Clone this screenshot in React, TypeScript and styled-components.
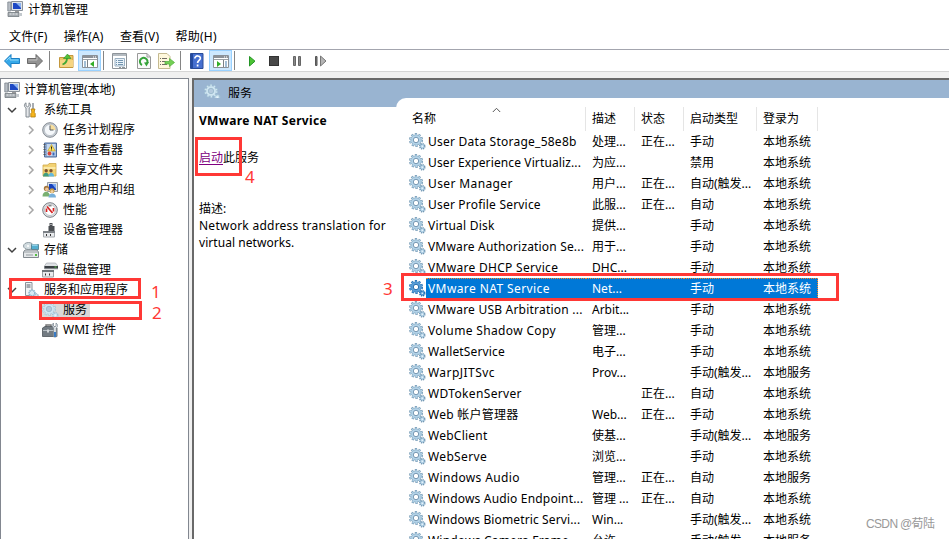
import React from 'react';
import styled, { createGlobalStyle, css } from 'styled-components';

const Global = createGlobalStyle`
  * { box-sizing: border-box; }
  html, body { margin: 0; padding: 0; overflow: hidden; }
  body { font: 12px/20px "Noto Sans", "Noto Sans CJK SC", sans-serif; color: #000; background: #fff; }
  svg { flex: none; }
`;

const Window = styled.div`
  position: relative;
  width: 949px; height: 539px;
  overflow: hidden;
  display: flex; flex-direction: column;
  background: #fff;
`;
const TitleBar = styled.div`
  height: 24px; flex: none;
  display: flex; align-items: flex-start; gap: 5px;
  padding: 0 0 0 7px;
  svg { margin-top: 1px; }
`;
const MenuBar = styled.div`
  height: 25px; flex: none;
  display: flex; align-items: center; gap: 16.3px;
  padding: 1px 0 0 9px;
`;
const MenuItem = styled.span`
  white-space: nowrap;
  letter-spacing: 0.2px;
`;
const ToolBar = styled.div`
  height: 23px; flex: none;
  display: flex; align-items: center;
  border-top: 1px solid #a3a5ae; border-bottom: 1px solid #d5d5d5;
  padding-left: 4px;
`;
const Tool = styled.div<{ $w?: number; $ml?: number; $on?: boolean }>`
  width: ${p => p.$w ?? 16}px; height: 21px; flex: none;
  margin-left: ${p => p.$ml ?? 0}px;
  display: flex; align-items: center; justify-content: center;
  ${p => p.$on && css`background: #cce8ff; border: 1px solid #99d1ff;`}
`;
const Divider = styled.div<{ $ml: number }>`
  width: 1px; height: 19px; flex: none; margin-left: ${p => p.$ml}px; background: #858585;
`;
const Workspace = styled.div`
  flex: 1; min-height: 0; display: flex; gap: 3px;
  padding-top: 6px; background: #f0f0f0;
`;
const TreePane = styled.div`
  width: 189px; flex: none; background: #fff;
  border: solid #828790; border-width: 1px 1px 0 1px;
  padding-top: 1px;
`;
const TreeRow = styled.div<{ $level: number }>`
  height: 20px; display: flex; align-items: center;
  padding-left: ${p => [3, 3, 22][p.$level]}px;
  white-space: nowrap;
`;
const Twisty = styled.span`
  width: 19px; height: 20px; display: flex; align-items: center; padding-left: 3px;
`;
const Label = styled.span<{ $selected?: boolean; $root?: boolean }>`
  height: 19px; line-height: 18px; margin-left: ${p => (p.$root ? 2 : 3)}px; padding: 0 3px 0 2px;
  background: ${p => (p.$selected ? '#d9d9d9' : 'transparent')};
`;
const IconBox = styled.span<{ $selected?: boolean }>`
  width: 16px; height: 19px; display: flex; align-items: center;
  ${p => p.$selected && css`background: #d9d9d9; box-shadow: 3px 0 #d9d9d9;`}
`;
const MainPane = styled.div`
  flex: 1; min-width: 0; background: #fff;
  border: solid #696969; border-width: 2px 0 0 2px;
  display: flex; flex-direction: column;
`;
const PaneHeader = styled.div`
  height: 18px; flex: none; background: #99b4d1;
  display: flex; align-items: flex-start; padding: 4px 0 0 10px; gap: 7px;
  white-space: nowrap;
`;
const PaneBody = styled.div`
  flex: 1; min-height: 0; display: flex;
  background: linear-gradient(#99b4d1 9px, #fff 9px);
`;
const PaneTitle = styled.div`line-height: 20px;`;
const Detail = styled.div`
  width: 202px; flex: none; padding: 14px 0 0 5px; line-height: 17px; white-space: nowrap;
`;
const ServiceTitle = styled.div`
  font-weight: 700; letter-spacing: 0.32px;
`;
const Action = styled.div`margin-top: 20px;`;
const Link = styled.span`color: #800080; text-decoration: underline; text-underline-offset: 2px;`;
const Description = styled.div`margin-top: 34px;`;
const DescriptionLine = styled.div<{ $track: number }>`letter-spacing: ${p => p.$track}px;`;

const ListPane = styled.div`
  flex: 1; min-width: 0; background: #fff; border-top-left-radius: 10px;
  padding-top: 9px;
`;
const columns = '190px 49px 49px 73px 61px';
const HeadRow = styled.div`
  position: relative;
  display: grid; grid-template-columns: ${columns};
  height: 24px;
`;
const HeadCell = styled.div`
  border-right: 1px solid #e5e5e5; padding: 2px 0 0 6px; white-space: nowrap;
  &:first-child { padding-left: 16px; }
`;
const SortMark = styled.svg`
  position: absolute; left: 96px; top: 0;
`;
const Row = styled.div`
  height: 21px; display: grid; grid-template-columns: ${columns};
  line-height: 21px;
`;
const NameCell = styled.div`
  min-width: 0; display: flex; align-items: center; padding-left: 13px;
`;
const Fill = styled.div<{ $on?: boolean; $end?: boolean }>`
  flex: 1; min-width: 0; height: 21px; white-space: nowrap;
  ${p => p.$on && css`
    height: 21px; line-height: 20px;
    color: #fff; background: #0078d7; border-top: 1px dotted #ff8728;
    ${p.$end && css`border-right: 1px dotted #ff8728;`}
  `}
`;
const Name = styled(Fill)<{ $track: number }>`
  padding-left: 2px; letter-spacing: ${p => p.$track}px;
`;
const Cell = styled(Fill)`padding-left: 6px;`;

const Mark = styled.div<{ $x: number; $y: number; $w: number; $h: number }>`
  position: absolute; border: 3px solid #ff3835;
  left: ${p => p.$x}px; top: ${p => p.$y}px; width: ${p => p.$w}px; height: ${p => p.$h}px;
`;
const MarkNumber = styled.div<{ $x: number; $y: number }>`
  position: absolute; left: ${p => p.$x}px; top: ${p => p.$y}px;
  font-size: 17px; line-height: 20px; color: #ff3835;
`;
const Watermark = styled.div`
  position: absolute; left: 866px; top: 514px; font-size: 12px; letter-spacing: -0.65px; color: #999; white-space: nowrap;
  font-family: "Liberation Sans", "Noto Sans CJK SC", sans-serif;
`;

const Svg = ({ children, w = 16, h = 16 }: { children: React.ReactNode; w?: number; h?: number }) => (
  <svg width={w} height={h} viewBox={`0 0 ${w} ${h}`} fill="none">{children}</svg>
);

const Computer = () => (
  <Svg>
    <path d="M.8 1h3v9h-3z" fill="#b8bec5" stroke="#7b838c" strokeWidth=".8" />
    <path d="M4.500.5h11v9h-11z" fill="#e0e4e8" stroke="#8b929a" />
    <path d="M6 2h8v6H6z" fill="#1d48c4" />
    <path d="M9 2h5v5z" fill="#8cb2f0" />
    <path d="M8 10h4v1.500H8z" fill="#999" />
    <path d="M1 11.500h11v4H1z" fill="#a5abb0" stroke="#747b81" strokeWidth=".8" />
    <path d="M2.500 13h2m1 0h2m1 0h2" stroke="#e9ecef" />
    <path d="M13 12h2v3h-2z" fill="#c2c8cd" />
  </Svg>
);
const Tools = () => (
  <Svg>
    <path d="M3 .8v3l1.500 1L6 3.800v-3c2 1 2.200 4 .2 5.200V15H3V6C.8 4.800 1 1.800 3 .8z" fill="#e5e8eb" stroke="#777f87" strokeWidth=".9" />
    <path d="M10 1v6" stroke="#8b9299" strokeWidth="1.500" />
    <path d="M8 7h4l-.7 2v1.500l.9 1V15H7.800v-3.500l.9-1V9z" fill="#f6b51c" stroke="#b07b0a" strokeWidth=".8" />
  </Svg>
);
const Clock = () => (
  <Svg>
    <circle cx="8" cy="8" r="7.300" fill="#c9ced4" stroke="#858c94" />
    <circle cx="8" cy="8" r="5.600" fill="#f5f8fb" stroke="#a8b0b8" strokeWidth=".6" />
    <path d="M8 2.500A5.500 5.500 0 0 1 13.500 8H8z" fill="#f7dd9b" />
    <path d="M8 3.500V8h3.500" stroke="#555c64" />
  </Svg>
);
const EventLog = () => (
  <Svg>
    <path d="M2.500 1h12v14h-12z" fill="#8dabd4" stroke="#4f6d9c" />
    <path d="M5 2h8.500v12H5z" fill="#c5d7ee" />
    <path d="M1.500 2.500h2m-2 2.500h2m-2 2.500h2m-2 2.500h2m-2 2.500h2" stroke="#555" />
    <path d="M9.500 2.500 13.300 9H5.700z" fill="#ffe25a" stroke="#b59720" strokeWidth=".6" />
    <path d="M9.500 4.500v2.300m0 .7v.8" stroke="#222" />
    <circle cx="7.500" cy="11.500" r="1.900" fill="#d9443b" />
    <path d="M10.500 10.500h2v3h-2z" fill="#3a68b8" />
  </Svg>
);
const SharedFolder = () => (
  <Svg>
    <path d="M1 3h5l1-1.500h7V14H1z" fill="#f2d274" stroke="#cfa84a" strokeWidth=".8" />
    <path d="M1.500 5h12v2h-12z" fill="#fbe9a8" />
    <circle cx="4.200" cy="8.800" r="1.700" fill="#7c5130" />
    <circle cx="9" cy="8.800" r="1.700" fill="#7c5130" />
    <path d="M1 14.500c0-5 6-5 6 0z" fill="#3f9c80" />
    <path d="M6.500 14.500c0-5 5.500-5 5.500 0z" fill="#62b8dc" />
  </Svg>
);
const Users = () => (
  <Svg>
    <path d="M5.500.5h10v9h-10z" fill="#dde2e7" stroke="#969da5" />
    <path d="M7 2h7v6H7z" fill="#1742bd" /><path d="M10 2h4v5z" fill="#7ba8ef" />
    <circle cx="4.500" cy="6.500" r="2.700" fill="#a4783f" /><circle cx="4.800" cy="7.200" r="1.700" fill="#efc69b" />
    <circle cx="10" cy="8.800" r="2.500" fill="#c29a45" /><circle cx="10" cy="9.400" r="1.500" fill="#f3d0a0" />
    <path d="M.5 14.500C.5 8 8 8.500 8 14.500z" fill="#79b072" /><path d="M6.500 15.500c0-5.500 7.500-5.500 7.500 0z" fill="#78b0da" />
  </Svg>
);
const Performance = () => (
  <Svg>
    <circle cx="8" cy="8" r="7.300" fill="#e3e5e8" stroke="#777d83" />
    <circle cx="8" cy="8" r="5.500" fill="#fff" stroke="#a8adb2" strokeWidth=".7" />
    <path d="M4.500 10V6.500m7 3V6M5 4.500l5.500 6.500" stroke="#d52323" strokeWidth="1.700" />
    <path d="M6.500 3.800h3" stroke="#555" />
  </Svg>
);
const Device = () => (
  <Svg>
    <path d="M7.500 1h3v3h2v6h-6V4h1z" fill="#4b4f53" /><path d="M8.500 2h1v1h-1z" fill="#fff" />
    <path d="M1.500 9.500h11v5.500h-11z" fill="#e8eaec" stroke="#a2a7ac" />
    <path d="M1 9h12v2H1z" fill="#7d8287" />
    <path d="M4.500 12v2m4-2v2" stroke="#333" />
  </Svg>
);
const Storage = () => (
  <Svg>
    <ellipse cx="5.500" cy="4" rx="5" ry="3.500" fill="#d2dce0" stroke="#7a8990" strokeWidth=".8" /><circle cx="5" cy="4" r="1" fill="#fff" />
    <path d="M8.500 2.500h7v5h-7z" fill="#54afd0" stroke="#467889" strokeWidth=".8" /><path d="M9 3h5.500" stroke="#c9f1ff" />
    <path d="M2 8h12l1.500 2v5.500H.5V10z" fill="#e4e7e9" stroke="#757d83" strokeWidth=".9" />
    <path d="M1 10h14" stroke="#989fa4" /><path d="M3 13h7" stroke="#949b9f" /><path d="M12 12h2v2h-2z" fill="#54bd43" />
  </Svg>
);
const Disk = () => (
  <Svg>
    <path d="M4.500 1h9L16 4v3H2.500V4z" fill="#dfe2e5" stroke="#9ba0a5" strokeWidth=".6" /><path d="M2.500 4H16v2.500H2.500z" fill="#3b4044" /><path d="M12.500 4.500h2v1h-2z" fill="#58c94a" />
    <path d="M.5 8.500h11v6.500H.5z" fill="#e8eaec" stroke="#9ca1a6" /><path d="M0 8h12v2H0z" fill="#6f757a" /><path d="M3.500 11.500v2m4-2v2" stroke="#333" />
  </Svg>
);
const ServerApps = () => (
  <Svg>
    <path d="M2.500.5h6.500v13h-6.500z" fill="#f0f2f4" stroke="#8b9299" /><path d="M3.500 3h4m-4 2h4" stroke="#555f68" />
    <path d="M1 14.500h6" stroke="#8b9299" />
    <circle cx="9" cy="11" r="2.900" fill="#d8eaf5" stroke="#8fb7cf" strokeWidth="1.700" strokeDasharray="1.500 .6" />
    <circle cx="13.500" cy="13.300" r="1.600" fill="#d6e5ee" stroke="#7ba2ba" strokeDasharray="1 .6" />
  </Svg>
);

type GearTone = 'normal' | 'faded' | 'selected';
const gearTones: Record<GearTone, { edge: string; ring: string; rim: string; hub: string }> = {
  normal: { edge: '#7297b2', ring: '#b3d3e8', rim: '#6c8fab', hub: '#fff' },
  faded: { edge: '#a0c0d3', ring: '#cfe5f1', rim: '#9bbacd', hub: '#b4cade' },
  selected: { edge: '#1c6cb0', ring: '#5a9fd8', rim: '#1763a6', hub: '#fff' },
};
const Gear = ({ tone = 'normal' }: { tone?: GearTone }) => {
  const t = gearTones[tone];
  return (
    <Svg w={17} h={17}>
      <circle cx="7" cy="7" r="6" stroke={t.edge} strokeWidth="2" strokeDasharray="2.200 1.570" />
      <circle cx="7" cy="7" r="5.200" fill={t.ring} stroke={t.edge} strokeWidth=".6" />
      <circle cx="7" cy="7" r="5.400" stroke={t.ring} strokeWidth="2" strokeDasharray="1.300 2.100" strokeDashoffset="-.4" />
      <circle cx="7" cy="7" r="2.700" fill={t.hub} stroke={t.rim} strokeWidth=".9" />
      <circle cx="13.300" cy="13.300" r="2.500" fill={t.ring} stroke={t.edge} strokeWidth="1.500" strokeDasharray="1.150 .81" />
      <circle cx="13.300" cy="13.300" r=".8" fill="#edf7fc" />
    </Svg>
  );
};
const Toolbox = () => (
  <Svg>
    <path d="M4 5V3h5v2" stroke="#777" strokeWidth="1.400" />
    <path d="M.5 6 3 4.500h9.500L15 6v8.500H.5z" fill="#737b82" stroke="#4e555b" strokeWidth=".8" />
    <path d="M1 8.500h13" stroke="#b9c0c5" /><path d="M5 7.500h2v3H5z" fill="#d3d7da" />
    <path d="M11.500 1v3l1.300 1L14 4V1c2 1 2 4 .2 5.200V15h-2.500V6C9.700 4.800 9.700 2 11.500 1z" fill="#e8edf1" stroke="#78848e" strokeWidth=".7" />
    <path d="M12 10h2v5h-2z" fill="#3a7bc4" />
  </Svg>
);

const Arrow = ({ forward = false }: { forward?: boolean }) => (
  <Svg>
    <path d={forward ? 'M15.500 8 9 1.500v4H.5v5H9v4z' : 'M.5 8 7 1.500v4h8.500v5H7v4z'} fill={forward ? '#929292' : '#36a9e9'} stroke={forward ? '#6a6a6a' : '#1b7fc4'} />
    <path d={forward ? 'M1.500 7H10V4' : 'M14.500 7H6V4L2.500 7.500'} stroke={forward ? '#c0c0c0' : '#91d9fa'} />
  </Svg>
);
const FolderUp = () => (
  <Svg w={15}>
    <path d="M.5 4.500H7l1-2h6v12H.5z" fill="#edc663" stroke="#c3973d" /><path d="M1 7h13v7H1z" fill="#f6d583" />
    <path d="M3.500 11.500C6.500 10.500 8 8.500 8 5" stroke="#3fa735" strokeWidth="1.800" /><path d="M4.500 5.500 8.500 1 12 5.500z" fill="#55c237" stroke="#27912a" strokeWidth=".6" />
  </Svg>
);
const ConsoleWindow = ({ right = false }: { right?: boolean }) => (
  <Svg>
    <path d="M.5 2.500h15v12H.5z" fill="#fff" stroke="#8b9198" /><path d="M1 3h14v2H1z" fill="#8b9198" />
    <path d="M11 4h1m1 0h1" stroke="#fff" /><path d="M1 6.500h14" stroke="#9aa0a5" />
    {right
      ? <><path d="M10.500 7v7" stroke="#7b8188" /><path d="M12 9h2m-2 2h2m-2 2h2" stroke="#477fae" /><path d="m4 8 4 3-4 3z" fill="#32ad27" /></>
      : <><path d="M5.500 7v7" stroke="#7b8188" /><path d="M2 9h2m-2 2h2m-2 2h2" stroke="#477fae" /><path d="m12 8-4 3 4 3z" fill="#32ad27" /></>}
  </Svg>
);
const Properties = () => (
  <Svg>
    <path d="M.5.5h14v15H.5z" fill="#fff" stroke="#8e9499" /><path d="M1 1h13v2H1z" fill="#b3bac0" />
    <path d="M3 5.500h9.500v7.500H3z" fill="#eaf3fa" stroke="#9ab0c2" /><path d="M4 7.500h1m1 0h5m-7 2h1m1 0h5m-7 2h1m1 0h5" stroke="#7294af" /><path d="M7 14.500h2m1 0h3" stroke="#8e9499" />
  </Svg>
);
const Refresh = () => (
  <Svg w={14}>
    <path d="M.5.5h9.500l3.500 3.500v11.500H.5z" fill="#fbfbfb" stroke="#999" /><path d="M10 .5V4h3.500" stroke="#999" />
    <path d="M5 12A3.800 3.800 0 1 1 10 10.500" stroke="#36a33a" strokeWidth="2" /><path d="m7 9.500 5-.5-2.500 4.500z" fill="#36a33a" />
  </Svg>
);
const Export = () => (
  <Svg w={17}>
    <path d="M.5.500h8.500l3 3v12H.500z" fill="#fff8dc" stroke="#c5ba91" /><path d="M2 5.500h1m1 0h5m-7 3h1m1 0h4m-6 3h1m1 0h5" stroke="#706c64" />
    <path d="M7 8.500h4.500V5.500l5 4-5 4v-2.500H7z" fill="#73cf54" stroke="#5bb445" strokeWidth=".8" />
  </Svg>
);
const Help = () => (
  <Svg w={14}>
    <path d="M.5.5h12.500v15H.5z" fill="#4670d0" stroke="#2a4c97" /><path d="M1 1h2v14H1z" fill="#234a9e" />
    <path d="M4.800 5.500c0-3.500 6-3.300 5.500.2C10 7.500 7.600 7.500 7.600 10M7.600 11.500v2" stroke="#fff" strokeWidth="1.700" />
  </Svg>
);

type TreeNode = { level: number; text: string; Icon: React.ComponentType; state?: 'open' | 'closed'; selected?: boolean };
const FadedGear = () => <Gear tone="faded" />;
const tree: TreeNode[] = [
  { level: 0, text: '计算机管理(本地)', Icon: Computer },
  { level: 1, text: '系统工具', Icon: Tools, state: 'open' },
  { level: 2, text: '任务计划程序', Icon: Clock, state: 'closed' },
  { level: 2, text: '事件查看器', Icon: EventLog, state: 'closed' },
  { level: 2, text: '共享文件夹', Icon: SharedFolder, state: 'closed' },
  { level: 2, text: '本地用户和组', Icon: Users, state: 'closed' },
  { level: 2, text: '性能', Icon: Performance, state: 'closed' },
  { level: 2, text: '设备管理器', Icon: Device },
  { level: 1, text: '存储', Icon: Storage, state: 'open' },
  { level: 2, text: '磁盘管理', Icon: Disk },
  { level: 1, text: '服务和应用程序', Icon: ServerApps, state: 'open' },
  { level: 2, text: '服务', Icon: FadedGear, selected: true },
  { level: 2, text: 'WMI 控件', Icon: Toolbox },
];

const S = '本地系统';
const L = '本地服务';
const R = '正在...';
/* name, description, status, startup type, log on as, letter spacing of the name */
const services: [string, string, string, string, string, number][] = [
  ['User Data Storage_58e8b', '处理...', R, '手动', S, 0.25],
  ['User Experience Virtualiz...', '为应...', '', '禁用', S, 0.12],
  ['User Manager', '用户...', R, '自动(触发...', S, 0.38],
  ['User Profile Service', '此服...', R, '自动', S, 0.2],
  ['Virtual Disk', '提供...', '', '手动', S, 0.22],
  ['VMware Authorization Se...', '用于...', '', '手动', S, 0.17],
  ['VMware DHCP Service', 'DHC...', '', '手动', S, 0.3],
  ['VMware NAT Service', 'Net...', '', '手动', S, 0.4],
  ['VMware USB Arbitration ...', 'Arbit...', '', '手动', S, 0.22],
  ['Volume Shadow Copy', '管理...', '', '手动', S, 0.35],
  ['WalletService', '电子...', '', '手动', S, 0.15],
  ['WarpJITSvc', 'Prov...', '', '手动(触发...', L, 0.45],
  ['WDTokenServer', '', R, '自动', S, 0.35],
  ['Web 帐户管理器', 'Web...', R, '手动', S, 0.25],
  ['WebClient', '使基...', '', '手动(触发...', L, 0.25],
  ['WebServe', '浏览...', '', '手动', S, 0.35],
  ['Windows Audio', '管理...', R, '自动', L, 0.35],
  ['Windows Audio Endpoint...', '管理 ...', R, '自动', S, 0.18],
  ['Windows Biometric Servi...', 'Win...', '', '手动(触发...', S, 0.13],
  ['Windows Camera Frame...', '允许...', '', '手动(触发...', L, 0.2],
];

export default function App() {
  return (
    <Window>
      <Global />
      <TitleBar><Computer /><span>计算机管理</span></TitleBar>
      <MenuBar>
        <MenuItem>文件(F)</MenuItem><MenuItem>操作(A)</MenuItem><MenuItem>查看(V)</MenuItem><MenuItem>帮助(H)</MenuItem>
      </MenuBar>
      <ToolBar>
        <Tool><Arrow /></Tool>
        <Tool $ml={7}><Arrow forward /></Tool>
        <Divider $ml={6} />
        <Tool $ml={8}><FolderUp /></Tool>
        <Tool $ml={4} $w={23} $on><ConsoleWindow /></Tool>
        <Divider $ml={2} />
        <Tool $ml={8}><Properties /></Tool>
        <Tool $ml={8}><Refresh /></Tool>
        <Tool $ml={6} $w={17}><Export /></Tool>
        <Divider $ml={5} />
        <Tool $ml={8}><Help /></Tool>
        <Tool $ml={4} $w={23} $on><ConsoleWindow right /></Tool>
        <Divider $ml={2} />
        <Tool $ml={9}><Svg><path d="M5.500 3.500v9.500L11 8.200z" fill="#4cc333" stroke="#249426" /></Svg></Tool>
        <Tool $ml={6}><Svg><rect x="3.500" y="3.500" width="9" height="9" fill="#484848" stroke="#333" /></Svg></Tool>
        <Tool $ml={7}><Svg><path d="M4.500 3.500h2v9h-2zm5 0h2v9h-2z" fill="#888" stroke="#666" /></Svg></Tool>
        <Tool $ml={8}><Svg><path d="M2.500 3.500h1.500v9h-1.500z" fill="#777" stroke="#555" /><path d="M7.500 3v10L13 8z" fill="#b5b5b5" stroke="#777" /></Svg></Tool>
      </ToolBar>
      <Workspace>
        <TreePane>
          {tree.map(({ level, text, Icon, state, selected }) => (
            <TreeRow key={text} $level={level}>
              {level > 0 && (
                <Twisty>
                  {state && (
                    <Svg w={10} h={10}>
                      <path d={state === 'open' ? 'm1 3 4 4 4-4' : 'm3 1 4 4-4 4'} stroke={state === 'open' ? '#404040' : '#a6a6a6'} strokeWidth="1.500" />
                    </Svg>
                  )}
                </Twisty>
              )}
              <IconBox $selected={selected}><Icon /></IconBox>
              <Label $selected={selected} $root={level === 0}>{text}</Label>
            </TreeRow>
          ))}
        </TreePane>
        <MainPane>
          <PaneHeader><Gear tone="faded" /><PaneTitle>服务</PaneTitle></PaneHeader>
          <PaneBody>
            <Detail>
              <ServiceTitle>VMware NAT Service</ServiceTitle>
              <Action><Link>启动</Link>此服务</Action>
              <Description>
                <div>描述:</div>
                <DescriptionLine $track={0.25}>Network address translation for</DescriptionLine>
                <DescriptionLine $track={0.05}>virtual networks.</DescriptionLine>
              </Description>
            </Detail>
            <ListPane>
              <HeadRow>
                <HeadCell>名称</HeadCell><HeadCell>描述</HeadCell><HeadCell>状态</HeadCell><HeadCell>启动类型</HeadCell><HeadCell>登录为</HeadCell>
                <SortMark width="9" height="6" viewBox="0 0 9 6"><path d="M.8 5 4.500 1.300 8.200 5" fill="none" stroke="#555" /></SortMark>
              </HeadRow>
              {services.map(([name, desc, status, start, logon, track]) => {
                const on = name === 'VMware NAT Service';
                return (
                  <Row key={name}>
                    <NameCell><Gear tone={on ? 'selected' : 'normal'} /><Name $on={on} $track={track}>{name}</Name></NameCell>
                    <Cell $on={on}>{desc}</Cell>
                    <Cell $on={on}>{status}</Cell>
                    <Cell $on={on}>{start}</Cell>
                    <Cell $on={on} $end>{logon}</Cell>
                  </Row>
                );
              })}
            </ListPane>
          </PaneBody>
        </MainPane>
      </Workspace>
      <Mark $x={9} $y={278} $w={132} $h={21} />
      <MarkNumber $x={151} $y={282}>1</MarkNumber>
      <Mark $x={39} $y={301} $w={103} $h={19} />
      <MarkNumber $x={152} $y={303}>2</MarkNumber>
      <Mark $x={401} $y={273} $w={438} $h={28} />
      <MarkNumber $x={383} $y={279}>3</MarkNumber>
      <Mark $x={195} $y={137} $w={47} $h={39} />
      <MarkNumber $x={245} $y={167}>4</MarkNumber>
      <Watermark>CSDN @荀陆</Watermark>
    </Window>
  );
}
